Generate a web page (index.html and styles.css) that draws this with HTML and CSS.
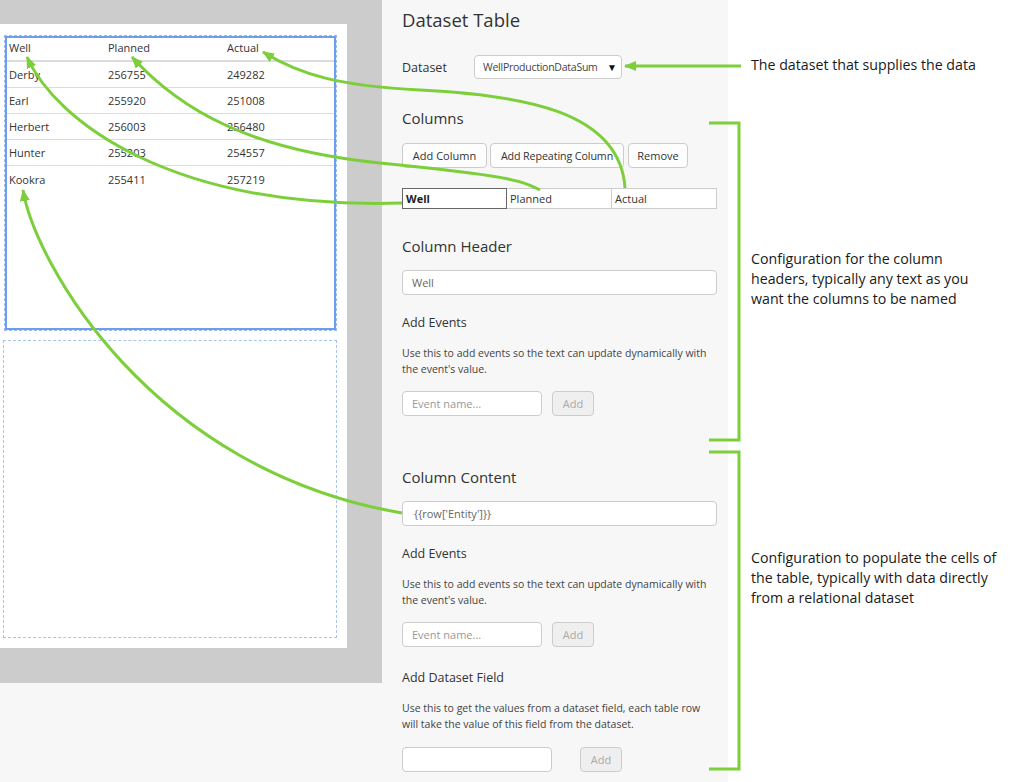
FILE: index.html
```html
<!DOCTYPE html>
<html>
<head>
<meta charset="utf-8">
<link rel="stylesheet" href="styles.css">
</head>
<body>
<div class="page">
  <div class="app">
    <div class="canvas">
      <div class="sheet">
        <div class="widget">
          <div class="trow thead">
            <div class="c1">Well</div><div class="c2">Planned</div><div class="c3">Actual</div>
          </div>
          <div class="trow"><div class="c1">Derby</div><div class="c2">256755</div><div class="c3">249282</div></div>
          <div class="trow"><div class="c1">Earl</div><div class="c2">255920</div><div class="c3">251008</div></div>
          <div class="trow"><div class="c1">Herbert</div><div class="c2">256003</div><div class="c3">256480</div></div>
          <div class="trow"><div class="c1">Hunter</div><div class="c2">255203</div><div class="c3">254557</div></div>
          <div class="trow last"><div class="c1">Kookra</div><div class="c2">255411</div><div class="c3">257219</div></div>
        </div>
        <div class="dropzone"></div>
      </div>
    </div>
    <div class="panel">
      <h1 class="title">Dataset Table</h1>
      <div class="dsrow">
        <span class="dslabel">Dataset</span>
        <div class="select"><span class="selval">WellProductionDataSum</span><span class="caret">▼</span></div>
      </div>
      <h2 class="h-columns">Columns</h2>
      <div class="btnrow">
        <button class="btn b1">Add Column</button>
        <button class="btn b2">Add Repeating Column</button>
        <button class="btn b3">Remove</button>
      </div>
      <div class="tabs">
        <div class="tab active">Well</div>
        <div class="tab">Planned</div>
        <div class="tab">Actual</div>
      </div>
      <h2 class="h-section h-header">Column Header</h2>
      <div class="field wide"><span class="val">Well</span></div>
      <h3 class="sub">Add Events</h3>
      <p class="desc">Use this to add events so the text can update dynamically with the event's value.</p>
      <div class="addrow">
        <div class="field small"><span class="ph">Event name...</span></div>
        <button class="btn-dis">Add</button>
      </div>
      <h2 class="h-section h-content">Column Content</h2>
      <div class="field wide"><span class="val code">{{row['Entity']}}</span></div>
      <h3 class="sub">Add Events</h3>
      <p class="desc">Use this to add events so the text can update dynamically with the event's value.</p>
      <div class="addrow">
        <div class="field small"><span class="ph">Event name...</span></div>
        <button class="btn-dis">Add</button>
      </div>
      <h3 class="sub sub-ds">Add Dataset Field</h3>
      <p class="desc">Use this to get the values from a dataset field, each table row will take the value of this field from the dataset.</p>
      <div class="addrow ds">
        <div class="field dsfield"></div>
        <button class="btn-dis">Add</button>
      </div>
    </div>
  </div>
  <div class="notes">
    <p class="note n1">The dataset that supplies the data</p>
    <p class="note n2">Configuration for the column<br>headers, typically any text as you<br>want the columns to be named</p>
    <p class="note n3">Configuration to populate the cells of<br>the table, typically with data directly<br>from a relational dataset</p>
  </div>
  <svg class="overlay" width="1011" height="782" viewBox="0 0 1011 782">
    <defs>
      <marker id="ah" viewBox="0 0 12 10" refX="11" refY="5" markerWidth="4" markerHeight="3.4" orient="auto-start-reverse" markerUnits="strokeWidth">
        <path d="M0,0 L12,5 L0,10 Z" fill="#7ccf3a"/>
      </marker>
    </defs>
    <g fill="none" stroke="#7ccf3a" stroke-width="3">
      <path d="M625,66 L741,66" marker-start="url(#ah)"/>
      <path d="M263,52 C300,75 340,86 420,90 C520,95 620,110 625,188" marker-start="url(#ah)"/>
      <path d="M132,57 C180,110 250,150 380,163 S520,180 540,190" marker-start="url(#ah)"/>
      <path d="M27,57 C55,120 170,210 402,203" marker-start="url(#ah)"/>
      <path d="M23,190 C35,262 150,470 402,513" marker-start="url(#ah)"/>
      <path d="M709,123 L739,123 L739,440 L709,440"/>
      <path d="M709,452 L739,452 L739,769 L709,769"/>
    </g>
  </svg>
</div>
</body>
</html>
```
FILE: styles.css
```css
* { box-sizing: border-box; }
html, body { margin: 0; padding: 0; background: #fff; }
body { font-family: "Open Sans", "Noto Sans", sans-serif; color: #333; }
.page { position: relative; width: 1011px; height: 782px; display: flex; overflow: hidden; }
.app { width: 728px; height: 782px; background: #f7f7f7; display: flex; align-items: flex-start; }
.canvas { width: 382px; height: 683px; background: #cccccc; padding-top: 24px; flex: none; }
.sheet { width: 347px; height: 624px; background: #fff; padding: 11px 0 0 3px; }
.widget { width: 333px; height: 296px; margin-left: 1px; border: 1px dashed #9bbcf2; box-shadow: inset 0 0 0 2px #6d9eeb; padding: 2px 2px; }
.trow { display: flex; height: 26px; border-bottom: 1px solid #dcdcdc; font-size: 11px; color: #333; align-items: center; }
.trow.thead { height: 24px; padding-bottom: 3px; border-bottom: 2px solid #dcdcdc; }
.trow.last { border-bottom: none; }
.c1 { width: 99px; padding-left: 2px; }
.c2 { width: 119px; padding-left: 2px; }
.c3 { padding-left: 2px; }
.dropzone { width: 334px; height: 298px; margin-top: 9px; border: 1px dashed #a9c3ef; }
.panel { width: 346px; padding: 8px 11px 0 20px; flex: none; }
.title { margin: 0; font-size: 18.5px; font-weight: 400; line-height: 24px; color: #333; }
.dsrow { display: flex; align-items: center; margin-top: 23px; height: 24px; }
.dslabel { width: 72px; font-size: 12.5px; color: #333; }
.select { width: 148px; height: 24px; border: 1px solid #ccc; border-radius: 4px; background: #fff; display: flex; align-items: center; justify-content: space-between; padding: 0 4px 0 8px; font-size: 10.5px; color: #444; }
.selval { letter-spacing: -0.25px; white-space: nowrap; }
.caret { font-size: 10px; color: #111; }
.h-columns { margin: 29px 0 0; font-size: 15px; font-weight: 400; line-height: 20px; color: #333; }
.btnrow { display: flex; margin-top: 15px; }
.btn { height: 25px; border: 1px solid #ccc; border-radius: 4px; background: #fdfdfd; font-family: inherit; font-size: 11px; color: #333; padding: 0; white-space: nowrap; }
.b1 { width: 85px; }
.b2 { width: 134px; margin-left: 3px; font-size: 10.7px; letter-spacing: -0.1px; }
.b3 { width: 60px; margin-left: 4px; }
.tabs { display: flex; margin-top: 20px; }
.tab { width: 105px; height: 21px; border: 1px solid #ccc; background: #fff; font-size: 11px; color: #333; padding-left: 3px; line-height: 19px; }
.tab + .tab { border-left: none; }
.tab.active { border-color: #666; font-weight: 700; color: #222; }
.h-section { margin: 27px 0 0; font-size: 15px; font-weight: 400; line-height: 20px; color: #333; }
.h-content { margin-top: 51px; }
.field { height: 25px; border: 1px solid #ccc; border-radius: 4px; background: #fff; display: flex; align-items: center; font-size: 11px; }
.field.wide { width: 315px; margin-top: 14px; padding-left: 9px; }
.val { color: #666; }
.val.code { padding-left: 2px; }
.sub { margin: 19px 0 0; font-size: 12.5px; font-weight: 400; line-height: 18px; color: #333; }
.sub-ds { margin-top: 22px; }
.desc { margin: 13px 0 0; font-size: 10.5px; line-height: 16px; color: #444; width: 310px; }
.addrow { display: flex; gap: 10px; margin-top: 14px; }
.field.small { width: 140px; padding-left: 9px; }
.ph { color: #999; }
.btn-dis { width: 42px; height: 25px; border: 1px solid #ccc; border-radius: 4px; background: #efefef; color: #aaa; font-family: inherit; font-size: 11px; padding: 0; }
.addrow.ds { gap: 28px; margin-top: 15px; }
.field.dsfield { width: 150px; }
.notes { flex: 1; padding-left: 23px; }
.note { margin: 0; font-size: 14.2px; line-height: 20px; color: #1a1a1a; white-space: nowrap; }
.n1 { margin-top: 55px; }
.n2 { margin-top: 174px; }
.n3 { margin-top: 239px; }
.overlay { position: absolute; left: 0; top: 0; pointer-events: none; }
```
